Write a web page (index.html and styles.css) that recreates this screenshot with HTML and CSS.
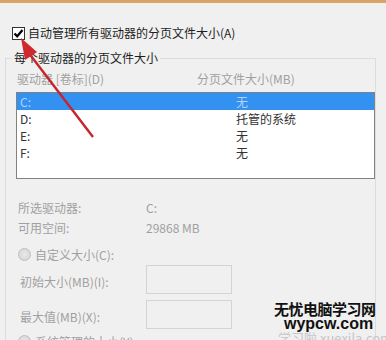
FILE: index.html
```html
<!DOCTYPE html>
<html lang="zh-CN">
<head>
  <meta charset="UTF-8">
  <title>虚拟内存</title>
  <link rel="stylesheet" href="styles.css">
</head>
<body>
  <div class="top-strip"></div>

  <label class="auto-row">
    <svg class="check" width="13" height="13" viewBox="0 0 13 13">
      <rect x="0.5" y="0.5" width="12" height="12" fill="#fff" stroke="#333"/>
      <path d="M2.5 6.5 L5.2 9.3 L10.5 3" fill="none" stroke="#000" stroke-width="2.2"/>
    </svg>
    <span>自动管理所有驱动器的分页文件大小(A)</span>
  </label>

  <fieldset class="group">
    <legend>每个驱动器的分页文件大小</legend>

    <div class="cols muted">
      <span>驱动器 [卷标](D)</span>
      <span>分页文件大小(MB)</span>
    </div>

    <div class="drive-list">
      <div class="drive selected"><span>C:</span><span>无</span></div>
      <div class="drive"><span>D:</span><span>托管的系统</span></div>
      <div class="drive"><span>E:</span><span>无</span></div>
      <div class="drive"><span>F:</span><span>无</span></div>
    </div>

    <div class="info muted">
      <div class="info-row"><span>所选驱动器:</span><span>C:</span></div>
      <div class="info-row"><span>可用空间:</span><span>29868 MB</span></div>
    </div>

    <div class="radio-row">
      <span class="radio"></span>
      <span>自定义大小(C):</span>
    </div>

    <div class="size-row first muted">
      <span>初始大小(MB)(I):</span>
      <span class="size-box"></span>
    </div>
    <div class="size-row muted">
      <span>最大值(MB)(X):</span>
      <span class="size-box"></span>
    </div>

    <div class="radio-row last">
      <span class="radio"></span>
      <span>系统管理的大小(Y)</span>
    </div>
  </fieldset>

  <!-- 红色箭头 -->
  <svg class="arrow" width="110" height="150" viewBox="0 0 110 150">
    <line x1="93" y1="137" x2="28" y2="52" stroke="#c4262c" stroke-width="2.4"/>
    <polygon points="21,38 37,52 25,60" fill="#d0282c"/>
  </svg>

  <div class="watermark">
    <div class="wm-cn">无忧电脑学习网</div>
    <div class="wm-en">wypcw.com</div>
    <div class="wm-faint">学习啦 xuexila.com</div>
  </div>
</body>
</html>
```

FILE: styles.css
```css
body {
  margin: 0;
  width: 386px;
  height: 340px;
  overflow: hidden;
  position: relative;
  background-color: #f0f0f0;
  color: #1e1e1e;
  font-family: "Noto Sans CJK SC", "Noto Sans", sans-serif;
  font-size: 12px;
}
.top-strip {
  height: 3px;
  background-color: #d9a567;
}
.auto-row {
  display: flex;
  align-items: center;
  gap: 3px;
  height: 16px;
  margin: 22px 0 0 12px;
  line-height: 16px;
}
.check {
  flex: none;
}
.group {
  margin: 9px 10px 0 5px;
  padding: 0 0 40px 10px;
  border: 1px solid #dcdcdc;
  min-width: 0;
}
.group legend {
  padding: 0 2px;
  margin-left: -4px;
  line-height: 16px;
  color: #1e1e1e;
}
.muted {
  color: #a0a0a0;
}
.cols {
  display: grid;
  grid-template-columns: 180px 1fr;
  height: 16px;
  line-height: 16px;
  margin-top: 5px;
  padding-left: 1px;
}
.drive-list {
  margin-top: 5px;
  height: 85px;
  border: 1px solid #828282;
  background-color: #fff;
}
.drive {
  display: grid;
  grid-template-columns: 216px 1fr;
  height: 17px;
  line-height: 17px;
  padding-left: 3px;
  color: #333;
}
.drive.selected {
  background-color: #3391f2;
  color: #b3d2f5;
}
.info {
  margin-top: 19px;
  padding-left: 2px;
}
.info-row {
  display: grid;
  grid-template-columns: 128px 1fr;
  height: 20px;
  line-height: 20px;
}
.radio-row {
  display: flex;
  align-items: center;
  gap: 4px;
  height: 20px;
  margin-top: 6px;
  padding-left: 2px;
  color: #a0a0a0;
}
.radio-row.last {
  margin-top: 2px;
}
.radio {
  width: 11px;
  height: 11px;
  border: 1px solid #bdbdbd;
  border-radius: 50%;
  background: radial-gradient(circle at 50% 50%, #e8e8e8 0, #d4d4d4 100%);
}
.size-row {
  display: flex;
  align-items: center;
  height: 29px;
  margin-top: 6px;
  padding-left: 4px;
}
.size-row.first {
  margin-top: 1px;
}
.size-row span:first-child {
  width: 126px;
  padding-top: 4px;
}
.size-box {
  width: 84px;
  height: 27px;
  border: 1px solid #d4d4d4;
  background-color: #f0f0f0;
}
.arrow {
  position: absolute;
  left: 0;
  top: 0;
}
.watermark {
  position: absolute;
  left: 274px;
  top: 300px;
  width: 112px;
  font-family: "Noto Sans CJK SC", sans-serif;
  font-weight: bold;
  color: #111;
}
.wm-cn {
  font-size: 15px;
  line-height: 17px;
  letter-spacing: -0.5px;
}
.wm-en {
  font-family: "Liberation Sans", Arial, sans-serif;
  font-size: 16px;
  line-height: 14px;
  margin-left: 10px;
}
.wm-faint {
  font-weight: normal;
  font-size: 13px;
  line-height: 14px;
  color: #c6c6c6;
  white-space: nowrap;
  margin-left: 4px;
}
```
